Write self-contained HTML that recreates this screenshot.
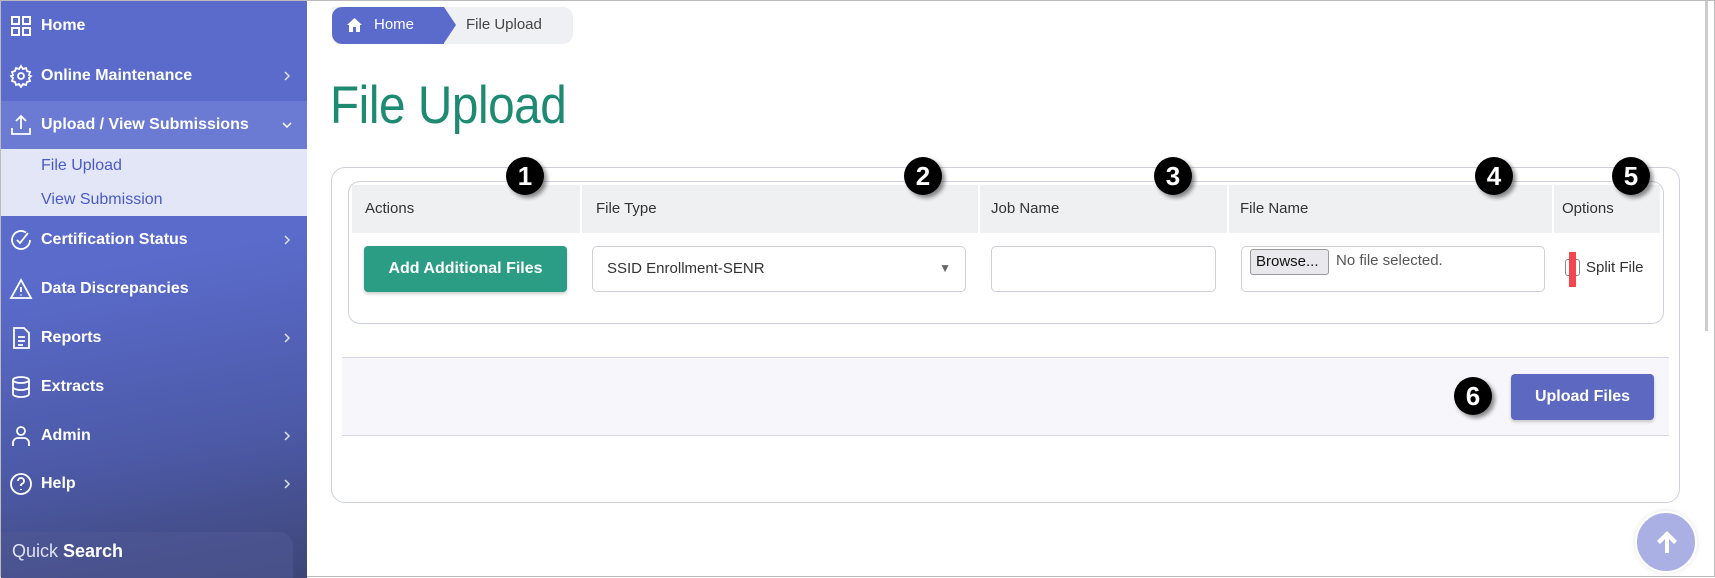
<!DOCTYPE html>
<html><head><meta charset="utf-8"><style>
*{box-sizing:border-box;margin:0;padding:0}
body{width:1715px;height:577px;overflow:hidden;background:#fff;font-family:"Liberation Sans",sans-serif;position:relative;border:1px solid #bbb}
.sb{position:absolute;left:0;top:0;width:306px;height:577px;background:linear-gradient(170deg,#5a6bcb 0%,#5a6bcb 45%,#4d5aa8 75%,#3e4677 100%)}
.it{position:absolute;left:0;width:306px;height:49px;color:#fff;font-weight:bold;font-size:16px;font-family:"Liberation Sans Narrow","Liberation Sans",sans-serif;display:flex;align-items:center;padding-left:40px}
.it svg.ic{position:absolute;left:8px;top:50%;margin-top:-12px}
.it .ch{position:absolute;right:14px;top:50%;margin-top:-6px;width:12px;height:12px}
.sub{position:absolute;left:0;top:148px;width:306px;height:67px;background:#e3e6f7}
.sub div{position:absolute;left:40px;color:#4a5bc4;font-size:16px;font-family:"Liberation Sans Narrow","Liberation Sans",sans-serif}
.qs{position:absolute;left:0;top:531px;width:292px;height:46px;background:rgba(80,90,150,.55);border-radius:0 14px 0 0;color:#dfe2f2;font-size:18px;padding:9px 0 0 11px;font-family:"Liberation Sans Narrow","Liberation Sans",sans-serif}
.bc{position:absolute;left:331px;top:6px;height:37px;width:241px;background:#eef0f3;border-radius:0 10px 10px 10px}
.bch{position:absolute;left:331px;top:6px;height:37px;width:112px;background:#5a6bcb;border-radius:10px 0 0 10px;color:#fff;font-size:15px;padding:9px 0 0 42px}
.bch:after{content:"";position:absolute;right:-12px;top:0;border-left:12px solid #5a6bcb;border-top:18.5px solid transparent;border-bottom:18.5px solid transparent}
.h1{position:absolute;left:329px;top:74px;font-size:53px;color:#1e8a72;transform:scaleX(.9);transform-origin:left;letter-spacing:-.5px}
.card{position:absolute;left:330px;top:166px;width:1349px;height:336px;border:1px solid #cfd2dc;border-radius:14px;background:rgba(255,255,255,.9)}
.tbl{position:absolute;left:347px;top:180px;width:1316px;height:143px;border:1px solid #cfd2dc;border-radius:12px;overflow:hidden}
.hd{position:absolute;left:3px;top:3px;right:3px;height:48px;background:#eff0f2}
.hd span{position:absolute;top:15px;font-size:15px;color:#333}
.dv{position:absolute;top:3px;width:2px;height:48px;background:#fff}
.btn{position:absolute;border-radius:4px;color:#fff;font-weight:bold;font-size:16px;text-align:center;font-family:"Liberation Sans Narrow","Liberation Sans",sans-serif}
.inp{position:absolute;top:245px;height:46px;border:1px solid #cdd0d6;border-radius:5px;background:#fff}
.band{position:absolute;left:341px;top:356px;width:1327px;height:79px;border-top:1px solid #d6d8e6;border-bottom:1px solid #d6d8e6;background:#f7f7fb}
.bd{position:absolute;width:38px;height:38px;border-radius:50%;background:#000;color:#fff;font-size:26px;font-weight:bold;text-align:center;line-height:38px;box-shadow:3px 3px 4px rgba(0,0,0,.45)}
</style></head><body>
<div class="sb">
 <div class="it" style="top:0"><svg class="ic" width="24" height="24" viewBox="0 0 24 24" fill="none" stroke="#fff" stroke-width="2"><rect x="3" y="3" width="7" height="7"/><rect x="14" y="3" width="7" height="7"/><rect x="3" y="14" width="7" height="7"/><rect x="14" y="14" width="7" height="7"/></svg>Home</div>
 <div class="it" style="top:50px"><svg class="ic" width="24" height="24" viewBox="0 0 24 24" fill="none" stroke="#fff" stroke-width="1.8"><circle cx="12" cy="12" r="3"/><path d="M12 2l2 3 3-1 1 3 3 1-1 3 2 1-2 2 1 3-3 1-1 3-3-1-2 3-2-3-3 1-1-3-3-1 1-3-2-2 2-1-1-3 3-1 1-3 3 1z"/></svg>Online Maintenance<svg class="ch" viewBox="0 0 12 12" fill="none" stroke="#dfe2f2" stroke-width="1.5"><path d="M4 2l4 4-4 4"/></svg></div>
 <div class="it" style="top:100px;height:48px;background:#6b7bd4"><svg class="ic" width="24" height="24" viewBox="0 0 24 24" fill="none" stroke="#fff" stroke-width="1.8"><path d="M12 16V3M7 8l5-5 5 5M3 15v6h18v-6"/></svg>Upload / View Submissions<svg class="ch" viewBox="0 0 12 12" fill="none" stroke="#fff" stroke-width="1.5"><path d="M2 4l4 4 4-4"/></svg></div>
 <div class="sub"><div style="top:8px">File Upload</div><div style="top:42px">View Submission</div></div>
 <div class="it" style="top:214px"><svg class="ic" width="24" height="24" viewBox="0 0 24 24" fill="none" stroke="#fff" stroke-width="1.8"><path d="M21 12a9 9 0 1 1-4-7.5"/><path d="M8 12l3 3 8-10"/></svg>Certification Status<svg class="ch" viewBox="0 0 12 12" fill="none" stroke="#dfe2f2" stroke-width="1.5"><path d="M4 2l4 4-4 4"/></svg></div>
 <div class="it" style="top:263px"><svg class="ic" width="24" height="24" viewBox="0 0 24 24" fill="none" stroke="#fff" stroke-width="1.8"><path d="M12 3L2 21h20z"/><path d="M12 10v5M12 17.5v1"/></svg>Data Discrepancies</div>
 <div class="it" style="top:312px"><svg class="ic" width="24" height="24" viewBox="0 0 24 24" fill="none" stroke="#fff" stroke-width="1.8"><path d="M5 2h10l5 5v15H5z"/><path d="M9 11h7M9 15h7M9 19h5"/></svg>Reports<svg class="ch" viewBox="0 0 12 12" fill="none" stroke="#dfe2f2" stroke-width="1.5"><path d="M4 2l4 4-4 4"/></svg></div>
 <div class="it" style="top:361px"><svg class="ic" width="24" height="24" viewBox="0 0 24 24" fill="none" stroke="#fff" stroke-width="1.8"><ellipse cx="12" cy="5" rx="8" ry="3"/><path d="M4 5v14c0 1.7 3.6 3 8 3s8-1.3 8-3V5M4 12c0 1.7 3.6 3 8 3s8-1.3 8-3"/></svg>Extracts</div>
 <div class="it" style="top:410px"><svg class="ic" width="24" height="24" viewBox="0 0 24 24" fill="none" stroke="#fff" stroke-width="1.8"><circle cx="12" cy="7" r="4"/><path d="M4 22v-3a5 5 0 0 1 5-5h6a5 5 0 0 1 5 5v3"/></svg>Admin<svg class="ch" viewBox="0 0 12 12" fill="none" stroke="#dfe2f2" stroke-width="1.5"><path d="M4 2l4 4-4 4"/></svg></div>
 <div class="it" style="top:458px"><svg class="ic" width="24" height="24" viewBox="0 0 24 24" fill="none" stroke="#fff" stroke-width="1.8"><circle cx="12" cy="12" r="10"/><path d="M9 9a3 3 0 1 1 4 2.8c-.7.3-1 .8-1 1.5V14M12 17v1"/></svg>Help<svg class="ch" viewBox="0 0 12 12" fill="none" stroke="#dfe2f2" stroke-width="1.5"><path d="M4 2l4 4-4 4"/></svg></div>
 <div class="qs">Quick <b style="color:#fff">Search</b></div>
</div>
<div class="bc"><span style="position:absolute;left:134px;top:9px;font-size:15px;color:#444">File Upload</span></div>
<div class="bch"><svg style="position:absolute;left:15px;top:11px" width="15" height="14" viewBox="0 0 15 14" fill="#fff"><path d="M7.5 0L0 7h2v7h4V9h3v5h4V7h2z"/></svg>Home</div>
<div class="h1">File Upload</div>
<div class="card"></div>
<div class="tbl">
 <div class="hd"><span style="left:13px">Actions</span><span style="left:244px">File Type</span><span style="left:639px">Job Name</span><span style="left:888px">File Name</span><span style="left:1210px">Options</span></div>
 <div class="dv" style="left:231px"></div><div class="dv" style="left:629px"></div><div class="dv" style="left:878px"></div><div class="dv" style="left:1203px"></div>
</div>
<div class="btn" style="left:363px;top:245px;width:203px;height:46px;background:#2a9d84;padding-top:14px;box-shadow:0 2px 3px rgba(0,0,0,.2)">Add Additional Files</div>
<div class="inp" style="left:591px;width:374px"><span style="position:absolute;left:14px;top:13px;font-size:15px;color:#333">SSID Enrollment-SENR</span><span style="position:absolute;right:14px;top:14px;font-size:12px;color:#666">▼</span></div>
<div class="inp" style="left:990px;width:225px"></div>
<div class="inp" style="left:1240px;width:304px"><span style="position:absolute;left:8px;top:2px;width:79px;height:26px;border:1px solid #999;border-radius:3px;background:#e9e9ed;font-size:15px;padding:3px 0 0 5px;color:#111">Browse...</span><span style="position:absolute;left:94px;top:5px;font-size:15px;color:#555">No file selected.</span></div>
<div style="position:absolute;left:1564px;top:258px;width:15px;height:17px;border:1px solid #888;border-radius:3px"></div>
<div style="position:absolute;left:1568px;top:251px;width:7px;height:35px;background:#f5454f"></div>
<span style="position:absolute;left:1585px;top:258px;font-size:15px;color:#333">Split File</span>
<div class="band"></div>
<div class="btn" style="left:1510px;top:373px;width:143px;height:46px;background:#5d69c0;padding-top:14px;box-shadow:0 2px 3px rgba(0,0,0,.2)">Upload Files</div>
<div class="bd" style="left:505px;top:156px">1</div>
<div class="bd" style="left:903px;top:156px">2</div>
<div class="bd" style="left:1153px;top:156px">3</div>
<div class="bd" style="left:1474px;top:156px">4</div>
<div class="bd" style="left:1611px;top:156px">5</div>
<div class="bd" style="left:1453px;top:376px">6</div>
<div style="position:absolute;left:1704px;top:0;width:3px;height:330px;background:#ccc"></div>
<div style="position:absolute;left:1634px;top:510px;width:62px;height:62px;border-radius:50%;background:#aab0e3;border:2px solid #fff;box-shadow:0 0 6px rgba(0,0,0,.1)"><svg style="position:absolute;left:19px;top:17px" width="22" height="24" viewBox="0 0 22 24" fill="#fff"><path d="M11 1L1 11l3 3 5-5v14h4V9l5 5 3-3z"/></svg></div>
</body></html>
